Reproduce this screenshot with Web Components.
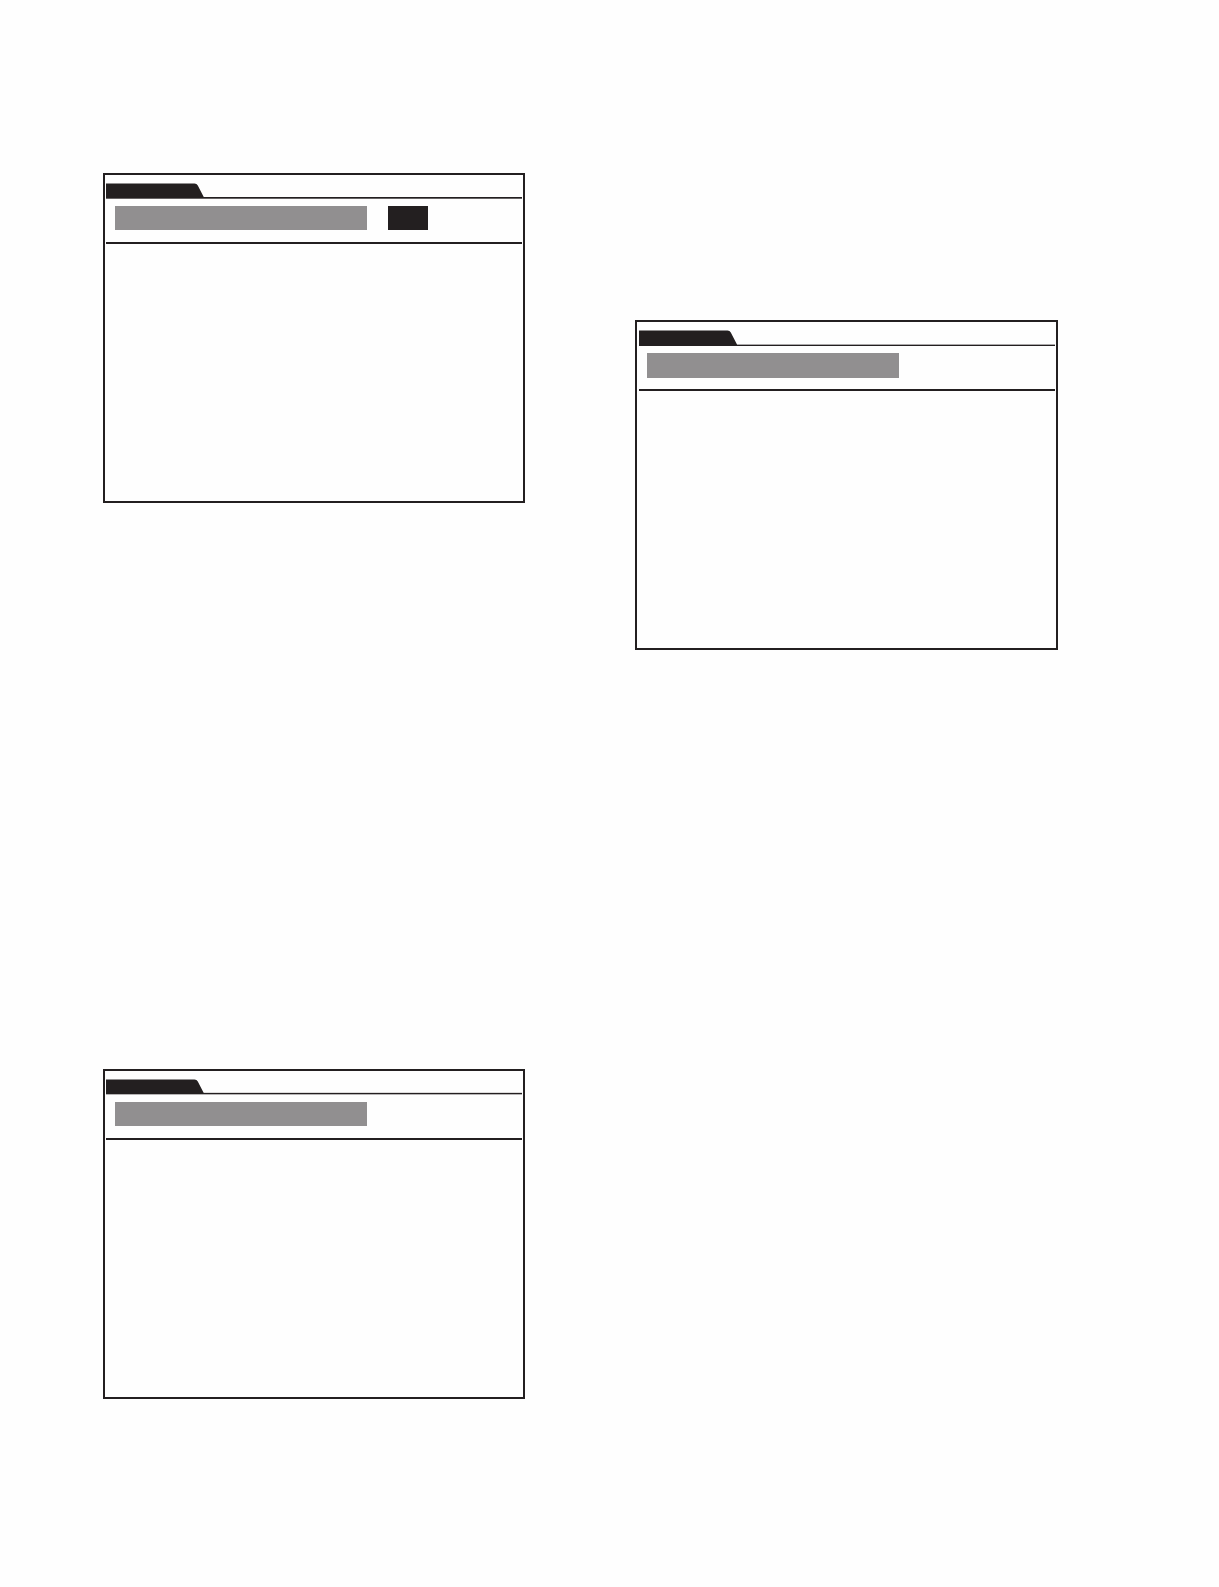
<!DOCTYPE html>
<html lang="en">
<head>
<meta charset="utf-8">
<title>Screens</title>
<style>
body {
	margin: 0;
	background: #fefefe;
	font-family: "Liberation Sans", Arial, sans-serif;
}

.late {
	--tab-line: linear-gradient(#fefefe 1px, #aaa8a9 1px 2px, #231f20 2px);
	--inset: 2px;
	--bar-left: 8px;
	--bar-height: 25px;
}

.last {
	--tab-line: linear-gradient(#dddcdc 1px, #231f20 1px 2px, #b5b3b4 2px);
}
</style>
</head>
<body>
<manual-page>
	<screen-panel>
		<screen-bar></screen-bar>
		<screen-bar kind="value"></screen-bar>
	</screen-panel>
	<screen-panel class="last">
		<screen-bar></screen-bar>
	</screen-panel>
	<screen-panel slot="right" class="late">
		<screen-bar></screen-bar>
	</screen-panel>
</manual-page>

<script>
const pageTemplate = document.createElement('template');
pageTemplate.innerHTML = `
	<style>
	:host {
		display: grid;
		grid-template-columns: 422fr 423fr;
		column-gap: 110px;
		padding: 173px 161px 64px 103px;
	}

	.column {
		display: flex;
		flex-direction: column;
		gap: 566px;
	}

	.right {
		padding-top: 147px;
	}
	</style>
	<div class='column'><slot></slot></div>
	<div class='column right'><slot name='right'></slot></div>`;

class ManualPage extends HTMLElement {
	constructor() {
		super();
		this.attachShadow({ mode: 'open' });
		this.shadowRoot.appendChild(pageTemplate.content.cloneNode(true));
	}
}

const panelTemplate = document.createElement('template');
panelTemplate.innerHTML = `
	<style>
	:host {
		display: block;
		box-sizing: border-box;
		min-height: 330px;
		padding: 8px 1px 8px var(--inset, 1px);
		border: 2px solid #231f20;
	}

	.tab-row {
		display: flex;
		height: 16px;
		background: var(--tab-line, linear-gradient(#fefefe 1px, #231f20 1px 2px, #666364 2px)) bottom / 100% 3px no-repeat;
	}

	svg {
		display: block;
		width: 98px;
		height: 16px;
		fill: #231f20;
	}

	.fields {
		display: flex;
		gap: 21px;
		padding: 7px 0 0 var(--bar-left, 9px);
		height: 36px;
		box-sizing: border-box;
		border-bottom: 0;
	}

	.rule {
		height: 2px;
		margin-top: 7px;
		background: #231f20;
	}
	</style>
	<div class='tab-row'>
		<svg viewBox='0 0 98 16' aria-hidden='true'>
			<path d='M0 .5H88.5Q90.800 .5 91.800 2.500L98 14.500V15H0Z'/>
		</svg>
	</div>
	<div class='fields'><slot></slot></div>
	<div class='rule'></div>`;

class ScreenPanel extends HTMLElement {
	constructor() {
		super();
		this.attachShadow({ mode: 'open' });
		this.shadowRoot.appendChild(panelTemplate.content.cloneNode(true));
	}
}

const barTemplate = document.createElement('template');
barTemplate.innerHTML = `
	<style>
	:host {
		display: block;
		width: 252px;
		height: var(--bar-height, 24px);
		background: #918f90;
	}

	:host([kind='value']) {
		width: 40px;
		background: #231f20;
	}
	</style>`;

class ScreenBar extends HTMLElement {
	constructor() {
		super();
		this.attachShadow({ mode: 'open' });
		this.shadowRoot.appendChild(barTemplate.content.cloneNode(true));
	}
}

window.customElements.define('manual-page', ManualPage);
window.customElements.define('screen-panel', ScreenPanel);
window.customElements.define('screen-bar', ScreenBar);
</script>
</body>
</html>
